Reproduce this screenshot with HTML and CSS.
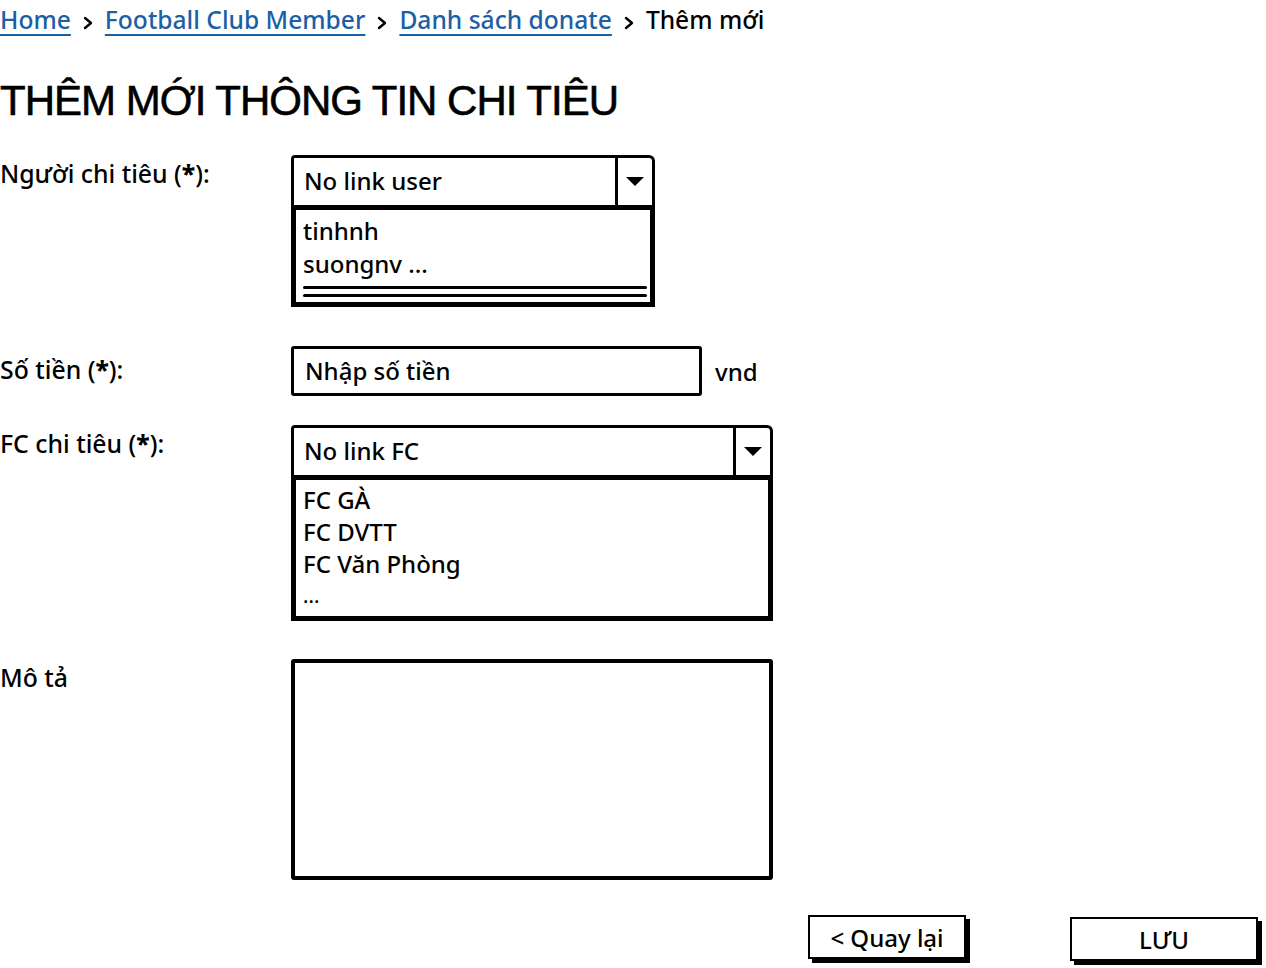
FILE: index.html
```html
<!DOCTYPE html>
<html lang="vi">
<head>
<meta charset="utf-8">
<title>Thêm mới thông tin chi tiêu</title>
<link rel="stylesheet" href="styles.css">
</head>
<body>
<div class="page">
  <nav class="crumbs">
    <a href="#" class="crumb-link">Home</a>
    <span class="sep"><svg width="10" height="14" viewBox="0 0 10 14"><polyline points="2,2 8,7 2,12" fill="none" stroke="#000" stroke-width="2.4" stroke-linecap="round" stroke-linejoin="round"/></svg></span>
    <a href="#" class="crumb-link">Football Club Member</a>
    <span class="sep"><svg width="10" height="14" viewBox="0 0 10 14"><polyline points="2,2 8,7 2,12" fill="none" stroke="#000" stroke-width="2.4" stroke-linecap="round" stroke-linejoin="round"/></svg></span>
    <a href="#" class="crumb-link">Danh sách donate</a>
    <span class="sep"><svg width="10" height="14" viewBox="0 0 10 14"><polyline points="2,2 8,7 2,12" fill="none" stroke="#000" stroke-width="2.4" stroke-linecap="round" stroke-linejoin="round"/></svg></span>
    <span class="crumb-current">Thêm mới</span>
  </nav>

  <h1 class="title">THÊM MỚI THÔNG TIN CHI TIÊU</h1>

  <div class="form">
    <div class="row row-user">
      <div class="label">Người chi tiêu (<b>*</b>):</div>
      <div class="combo combo-user">
        <div class="combo-head">
          <span class="combo-value">No link user</span>
          <span class="combo-btn"><span class="tri"></span></span>
        </div>
        <div class="combo-list list-user">
          <div class="item">tinhnh</div>
          <div class="item">suongnv ...</div>
          <div class="scribble"></div>
          <div class="scribble scribble-2"></div>
        </div>
      </div>
    </div>

    <div class="row row-amount">
      <div class="label">Số tiền (<b>*</b>):</div>
      <div class="amount">
        <div class="input">Nhập số tiền</div>
        <span class="unit">vnd</span>
      </div>
    </div>

    <div class="row row-fc">
      <div class="label">FC chi tiêu (<b>*</b>):</div>
      <div class="combo combo-fc">
        <div class="combo-head">
          <span class="combo-value">No link FC</span>
          <span class="combo-btn"><span class="tri"></span></span>
        </div>
        <div class="combo-list list-fc">
          <div class="item">FC GÀ</div>
          <div class="item">FC DVTT</div>
          <div class="item">FC Văn Phòng</div>
          <div class="item item-more">...</div>
        </div>
      </div>
    </div>

    <div class="row row-desc">
      <div class="label">Mô tả</div>
      <div class="textarea"></div>
    </div>
  </div>

  <div class="actions">
    <button class="btn btn-back">&lt; Quay lại</button>
    <button class="btn btn-save">LƯU</button>
  </div>
</div>
</body>
</html>
```

FILE: styles.css
```css
html, body {
  margin: 0;
  padding: 0;
  background: #ffffff;
}

body {
  font-family: "Noto Sans", "Liberation Sans", Arial, sans-serif;
  font-weight: 500;
  color: #000000;
  font-size: 24px;
}

.page {
  width: 1266px;
  height: 968px;
  overflow: hidden;
}

.crumbs {
  display: flex;
  align-items: baseline;
  height: 40px;
  padding-top: 3px;
  line-height: 34px;
  font-size: 24.6px;
}

.crumb-link {
  color: #1b5fa6;
  text-decoration: underline;
  text-decoration-thickness: 2px;
  text-underline-offset: 5px;
}

.sep {
  display: inline-block;
  width: 34px;
  text-align: center;
}

.sep svg {
  display: inline-block;
  vertical-align: -1px;
}

.crumb-current {
  color: #000;
}

.title {
  margin: 30px 0 0 0;
  font-family: "Liberation Sans", Arial, sans-serif;
  font-weight: normal;
  font-size: 42px;
  line-height: 56px;
  letter-spacing: -1px;
  height: 56px;
  -webkit-text-stroke: 0.6px #000;
}

.form {
  margin-top: 26px;
  display: flex;
  flex-direction: column;
}

.row {
  display: grid;
  grid-template-columns: 291px auto;
  align-items: start;
}

.label {
  font-size: 24.8px;
  line-height: 30px;
  padding-top: 3px;
}

.label b {
  font-weight: 800;
}

.row-amount {
  margin-top: 39px;
}
.row-amount .label {
  padding-top: 8px;
}

.row-fc {
  margin-top: 29px;
}

.row-desc {
  margin-top: 38px;
}
.row-desc .label {
  padding-top: 3px;
}

/* combo boxes */
.combo {
  display: flex;
  flex-direction: column;
}

.combo-user { width: 364px; }
.combo-fc { width: 482px; }

.combo-head {
  display: flex;
  height: 47px;
  border: 3px solid #000;
  border-bottom: none;
  border-radius: 4px 6px 0 0;
  box-sizing: content-box;
}

.combo-value {
  flex: 1;
  padding-left: 10px;
  line-height: 46px;
  font-size: 24px;
}

.combo-btn {
  width: 34px;
  border-left: 3px solid #000;
  display: flex;
  align-items: center;
  justify-content: center;
}

.tri {
  width: 0;
  height: 0;
  border-left: 9px solid transparent;
  border-right: 9px solid transparent;
  border-top: 9px solid #000;
}

.combo-list {
  border: 5px solid #000;
  padding: 4px 0 0 7px;
  box-sizing: border-box;
}

.list-user { height: 102px; }
.list-fc { height: 146px; }

.item {
  font-size: 24px;
  line-height: 33px;
}

.list-fc .item {
  line-height: 32px;
}

.item-more {
  line-height: 28px;
  font-size: 20px;
}

.scribble {
  margin-top: 6px;
  margin-right: 3px;
  height: 3px;
  background: #000;
  border-radius: 2px;
}
.scribble-2 {
  margin-top: 5px;
}

/* amount input */
.amount {
  display: flex;
  align-items: center;
}

.input {
  width: 394px;
  height: 44px;
  border: 3px solid #000;
  border-radius: 3px;
  padding-left: 11px;
  line-height: 44px;
  box-sizing: content-box;
  font-size: 24px;
}

.unit {
  margin-left: 13px;
  font-size: 24px;
}

/* textarea */
.textarea {
  width: 482px;
  height: 221px;
  border: 4px solid #000;
  border-radius: 3px;
  box-sizing: border-box;
}

/* buttons */
.actions {
  display: flex;
  margin-top: 35px;
  padding-left: 808px;
  gap: 104px;
}

.btn {
  font-family: inherit;
  font-weight: 500;
  font-size: 24px;
  color: #000;
  background: #fff;
  border: 2px solid #000;
  border-radius: 0;
  height: 44px;
  padding: 0;
  box-shadow: 4px 4px 0 #000;
  cursor: pointer;
}

.btn-back {
  width: 158px;
}

.btn-save {
  width: 188px;
  margin-top: 2px;
}
```
